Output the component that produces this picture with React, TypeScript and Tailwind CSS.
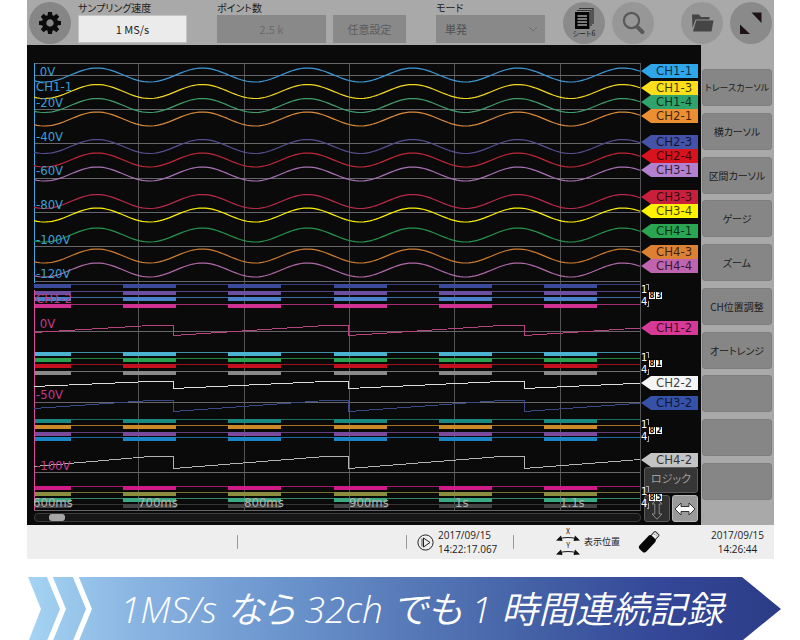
import React from 'react';

interface Channel {
  name: string;
  tagY: number;
  tag: string;
  line: string;
}

interface SineChannel extends Channel {
  center: number;
}

interface RampChannel extends Channel {
  start: number;
  high: number;
  low: number;
}

// All y values are measured from the top edge of the plot.
const PLOT_WIDTH = 607;
const PLOT_HEIGHT = 449;
const PERIOD = 105.25;
const RAMP_PERIOD = 175.3;

const sineChannels: SineChannel[] = [
  { name: 'CH1-1', center: 12, tagY: 8, tag: '#2fa5ea', line: '#3f9bd8' },
  { name: 'CH1-3', center: 28.5, tagY: 25, tag: '#fcdf1a', line: '#f2d91f' },
  { name: 'CH1-4', center: 42.5, tagY: 39, tag: '#2fa36b', line: '#3f9f6c' },
  { name: 'CH2-1', center: 56, tagY: 53, tag: '#ea9033', line: '#d98a3a' },
  { name: 'CH2-3', center: 83.5, tagY: 79, tag: '#4452a8', line: '#54508f' },
  { name: 'CH2-4', center: 97, tagY: 93, tag: '#d8131f', line: '#c02838' },
  { name: 'CH3-1', center: 111, tagY: 107, tag: '#b380cf', line: '#a873b4' },
  { name: 'CH3-3', center: 138.5, tagY: 134, tag: '#c8203c', line: '#b82a4a' },
  { name: 'CH3-4', center: 152, tagY: 148, tag: '#fff200', line: '#fff200' },
  { name: 'CH4-1', center: 172, tagY: 168, tag: '#2aa552', line: '#26954f' },
  { name: 'CH4-3', center: 193, tagY: 189, tag: '#dc8033', line: '#cc7c30' },
  { name: 'CH4-4', center: 207, tagY: 203, tag: '#c064b0', line: '#b06aa8' },
];

const rampChannels: RampChannel[] = [
  { name: 'CH1-2', start: 269.5, high: 262.5, low: 272.5, tagY: 265, tag: '#d63a96', line: '#b8447f' },
  { name: 'CH2-2', start: 323.5, high: 318.5, low: 325.5, tagY: 320, tag: '#f5f5f5', line: '#dcdcdc' },
  { name: 'CH3-2', start: 345.5, high: 337.5, low: 348.5, tagY: 340, tag: '#3552a8', line: '#3a4a86' },
  { name: 'CH4-2', start: 403.5, high: 393.5, low: 405.5, tagY: 397, tag: '#c4c4c4', line: '#b4b4b4' },
];

const logicGroups = [
  { digit: '3', rows: [221, 228, 234, 241], colors: ['#3c4a9b', '#6b4fa0', '#4a80c8', '#cf3191'] },
  { digit: '1', rows: [289, 295, 301, 308], colors: ['#4bb3cf', '#2aa050', '#c4101f', '#8a8a8a'] },
  { digit: '2', rows: [356, 362, 369, 374], colors: ['#1a8a80', '#cc8a2b', '#7a4a9c', '#1a85c4'] },
  { digit: '5', rows: [423, 429, 435, 441], colors: ['#cf1a88', '#8c8c40', '#3aa880', '#444444'] },
];

const hLines = [0, 12, 46, 80, 115, 149, 183, 218, 268, 339, 409, 447];
const vLines = [104, 210, 315, 420, 526, 606];

const upperScale = [
  { text: '\u00a00V', y: 9 },
  { text: 'CH1-1', y: 24 },
  { text: '-20V', y: 40 },
  { text: '-40V', y: 74 },
  { text: '-60V', y: 108 },
  { text: '-80V', y: 142 },
  { text: '-100V', y: 177 },
  { text: '-120V', y: 211 },
];

const lowerScale = [
  { text: 'CH1-2', y: 236 },
  { text: '\u00a00V', y: 261 },
  { text: '-50V', y: 332 },
  { text: '-100V', y: 403 },
];

const timeTicks = [
  { text: '600ms', x: -1 },
  { text: '700ms', x: 104 },
  { text: '800ms', x: 210 },
  { text: '900ms', x: 315 },
  { text: '1s', x: 421 },
  { text: '1.1s', x: 526 },
];

const sideButtons = [
  'トレースカーソル',
  '横カーソル',
  '区間カーソル',
  'ゲージ',
  'ズーム',
  'CH位置調整',
  'オートレンジ',
  '',
  '',
  '',
];

function sinePath(center: number) {
  const points: string[] = [];
  for (let x = 0; x <= 606; x += 3) {
    const y = center - 7 * Math.cos((2 * Math.PI * (x - 63)) / PERIOD);
    points.push(`${x},${y.toFixed(2)}`);
  }
  return points.join(' ');
}

function rampPath({ start, high, low }: RampChannel) {
  let d = `M0 ${start} L116 ${high} H139.5`;
  for (let i = 0; i < 2; i += 1) {
    const x = 139.5 + i * RAMP_PERIOD;
    d += ` V${low} L${x + 152} ${high} H${x + RAMP_PERIOD}`;
  }
  const y = low + (high - low) * 0.75;
  return `${d} V${low} L606 ${y}`;
}

const Plot = () => (
  <div className="relative h-[449px] min-w-0 flex-1 overflow-hidden">
    <svg
      className="absolute inset-0 h-full w-full"
      viewBox={`0 0 ${PLOT_WIDTH} ${PLOT_HEIGHT}`}
      preserveAspectRatio="none"
      fill="none"
    >
      <g shapeRendering="crispEdges">
        {vLines.map((x) => (
          <path key={x} d={`M${x + 0.5} 0V448`} stroke="#545456" />
        ))}
        {hLines.map((y) => (
          <path key={y} d={`M0 ${y + 0.5}H606`} stroke="#66666a" />
        ))}
        {logicGroups.map((group) =>
          group.rows.map((y, i) => (
            <g key={y}>
              <path d={`M0 ${y + 0.5}H606`} stroke={group.colors[i]} strokeOpacity={0.8} />
              {[-1, 0, 1, 2, 3, 4].map((k) => (
                <rect key={k} x={89 + k * PERIOD} y={y} width={53} height={4} fill={group.colors[i]} />
              ))}
            </g>
          )),
        )}
        <path d="M0.5 0V220" stroke="#3fa9e0" />
        <path d="M0.5 227V447" stroke="#d84a9a" />
      </g>
      {sineChannels.map((ch) => (
        <polyline key={ch.name} points={sinePath(ch.center)} stroke={ch.line} strokeWidth={1.2} />
      ))}
      {rampChannels.map((ch) => (
        <path key={ch.name} d={rampPath(ch)} stroke={ch.line} shapeRendering="crispEdges" />
      ))}
    </svg>

    {upperScale.map((label) => (
      <span
        key={label.text}
        className="absolute left-[2px] -translate-y-1/2 text-[13px] leading-4 text-[#3a9fd6]"
        style={{ top: label.y }}
      >
        {label.text}
      </span>
    ))}
    {lowerScale.map((label) => (
      <span
        key={label.text}
        className="absolute left-[2px] -translate-y-1/2 text-[13px] leading-4 text-[#c23a8a]"
        style={{ top: label.y }}
      >
        {label.text}
      </span>
    ))}
    {timeTicks.map((tick) => (
      <span
        key={tick.text}
        className="absolute top-[432px] text-[13px] leading-4 text-[#b0b0b0]"
        style={{ left: `${(tick.x / PLOT_WIDTH) * 100}%` }}
      >
        {tick.text}
      </span>
    ))}
  </div>
);

const TagLane = () => (
  <div className="relative flex w-[60px] shrink-0 flex-col justify-end gap-[2px] pr-[3px] pb-[3px] pl-[3px]">
    {[...sineChannels, ...rampChannels].map((ch) => (
      <span
        key={ch.name}
        className="absolute left-0 h-[14px] w-[57px] -translate-y-1/2 pl-[15px] text-[13px] leading-[14px] text-black/75 [clip-path:polygon(0_50%,10px_0,100%_0,100%_100%,10px_100%)]"
        style={{ top: ch.tagY + 18, backgroundColor: ch.tag }}
      >
        {ch.name}
      </span>
    ))}

    <button type="button" className="h-[26px] rounded-[3px] border border-[#5a5a5a] bg-[#363636] text-[11px] text-[#a0a0a0]">
      ロジック
    </button>
    <div className="flex gap-[2px]">
      <button
        type="button"
        aria-label="縦"
        className="flex h-[27px] flex-1 items-center justify-center rounded-[3px] border border-[#5a5a5a] bg-[#303030]"
      >
        <svg width="12" height="22" viewBox="0 0 12 22" fill="none" stroke="#8a8a8a">
          <path d="M6 .8 1 6H3.8V16H1L6 21.2 11 16H8.2V6H11Z" />
        </svg>
      </button>
      <button
        type="button"
        aria-label="横"
        className="flex h-[27px] flex-1 items-center justify-center rounded-[3px] border border-[#b8b8b8] bg-[#9a9a9a]"
      >
        <svg className="shrink-0" width="22" height="14" viewBox="0 0 22 14" fill="#fff" stroke="#333">
          <path d="M1 7 7 1V4.5H15V1L21 7 15 13V9.5H7V13Z" />
        </svg>
      </button>
    </div>

    {logicGroups.map((group) => (
      <div key={group.digit} className="absolute left-0 h-5 w-5 text-white" style={{ top: group.rows[0] + 18 }}>
        <span className="absolute top-0 left-0 text-[11px] leading-3">1</span>
        <span className="absolute top-3 left-0 text-[11px] leading-3">4</span>
        <svg className="absolute top-0 left-1" width="5" height="23" fill="none" stroke="#aaa" shapeRendering="crispEdges">
          <path d="M1 .5H3.5V6M3.5 17V22.5H2" />
        </svg>
        <span className="absolute top-[8px] left-[8px] flex gap-px text-[8px] leading-[7px] font-bold text-black">
          <span className="w-[6px] bg-white text-center">8</span>
          <span className="w-[6px] bg-white text-center">{group.digit}</span>
        </span>
      </div>
    ))}
  </div>
);

const RoundButton = ({ label, className = '', children }: { label: string; className?: string; children: React.ReactNode }) => (
  <button
    type="button"
    aria-label={label}
    className={`flex h-[42px] w-[42px] shrink-0 flex-col items-center justify-center rounded-full ${className}`}
  >
    {children}
  </button>
);

const Header = () => (
  <header className="flex h-[45px] items-center bg-[#a9a9a9] px-[2px] text-[#1c1c1c]">
    <RoundButton label="設定" className="bg-[#868686]">
      <svg width="24" height="24" viewBox="-12 -12 24 24" fill="#0c0c0c">
        {[0, 45, 90, 135, 180, 225, 270, 315].map((angle) => (
          <path key={angle} d="M-2.6 -6 -2 -11H2L2.6 -6Z" transform={`rotate(${angle})`} />
        ))}
        <circle r="5.9" fill="none" stroke="#0c0c0c" strokeWidth="4.4" />
      </svg>
    </RoundButton>

    <div className="ml-[7px] flex h-full w-[109px] flex-col">
      <label htmlFor="rate" className="h-[15px] text-[10px] leading-[15px] whitespace-nowrap">
        サンプリング速度
      </label>
      <input
        id="rate"
        readOnly
        defaultValue="1 MS/s"
        className="h-[28px] w-full border border-[#c4c4c4] bg-[#ebebeb] text-center text-[11px]"
      />
    </div>

    <div className="ml-[30px] flex h-full w-[109px] flex-col">
      <label htmlFor="points" className="h-[15px] text-[10px] leading-[15px] whitespace-nowrap">
        ポイント数
      </label>
      <input
        id="points"
        disabled
        defaultValue="2.5 k"
        className="h-[28px] w-full bg-[#898989] text-center text-[11px] text-[#6a6a6a]"
      />
    </div>
    <button type="button" disabled className="mt-[13px] ml-[7px] h-[28px] w-[73px] bg-[#898989] text-[11px] text-[#5c5c5c]">
      任意設定
    </button>

    <div className="relative ml-[30px] flex h-full w-[109px] flex-col">
      <label htmlFor="mode" className="h-[15px] text-[10px] leading-[15px] whitespace-nowrap">
        モード
      </label>
      <select
        id="mode"
        disabled
        className="h-[28px] w-full appearance-none bg-[#898989] pl-[9px] text-[11px] text-[#505050] opacity-100"
      >
        <option>単発</option>
      </select>
      <svg className="pointer-events-none absolute right-[7px] bottom-[13px]" width="10" height="6" fill="none" stroke="#6e6e6e">
        <path d="M1 1 5 5 9 1" />
      </svg>
    </div>

    <div className="ml-auto flex gap-[7px]">
      <RoundButton label="シート6" className="bg-[#8a8a8a]">
        <svg width="20" height="21" viewBox="0 0 20 21">
          <path d="M5 .5H19V16" fill="none" stroke="#333" strokeWidth="1.2" />
          <path d="M3 2.5H17V18" fill="none" stroke="#333" strokeWidth="1.2" />
          <rect x="1" y="4" width="14.5" height="17" fill="#050505" />
          <path d="M3.5 8H13M3.5 11H13M3.5 14H13M3.5 17H13" stroke="#a0a0a0" strokeWidth="1.3" />
        </svg>
        <span className="text-[7px] leading-[9px]">シート6</span>
      </RoundButton>
      <RoundButton label="検索" className="mr-5 bg-[#979797]">
        <svg width="24" height="24" viewBox="0 0 24 24" fill="none" stroke="#585858">
          <circle cx="10.5" cy="9.5" r="7.6" strokeWidth="2.2" />
          <path d="M15.6 15.2 17.6 17.2" strokeWidth="2.4" />
          <path d="M17 16.6 21.4 21" strokeWidth="4" strokeLinecap="round" />
        </svg>
      </RoundButton>
      <RoundButton label="フォルダ" className="bg-[#979797]">
        <svg width="23" height="20" viewBox="0 0 23 20" fill="#454545">
          <path d="M1 1.5H8L10 4H18.5V6.5H4.5L1.5 15Z" />
          <path d="M5.2 7.5H22.5L20.5 18.5H2Z" />
        </svg>
      </RoundButton>
      <RoundButton label="全画面" className="bg-[#8a8a8a]">
        <svg width="24" height="24" viewBox="0 0 24 24" fill="#1c1214">
          <path d="M12.5 1.5H22.5V12Z" />
          <path d="M1 13.5V23H11Z" />
        </svg>
      </RoundButton>
    </div>
  </header>
);

const AxisArrow = ({ axis }: { axis: string }) => (
  <span className="flex flex-col items-center">
    <span className="text-[7px] leading-[7px]">{axis}</span>
    <svg width="24" height="7" viewBox="0 0 24 7">
      <path d="M4 3.5Q12 1.5 20 3.5" fill="none" stroke="#222" strokeWidth="1.2" />
      <path d="M0 5.5 5 .5 6.5 6ZM24 5.5 19 .5 17.5 6Z" fill="#111" />
    </svg>
  </span>
);

const StatusBar = () => (
  <footer className="flex h-[34px] items-center bg-[#eeeeee] text-[#1c1c1c]">
    <span className="h-[14px] w-[211px] border-r border-[#999]" />
    <span className="h-[14px] w-[169px] border-r border-[#999]" />
    <div className="flex w-[106px] items-center gap-1 pl-[10px]">
      <svg className="shrink-0" width="17" height="17" viewBox="0 0 17 17" fill="none" stroke="#222">
        <circle cx="8.5" cy="8.5" r="7.6" />
        <path d="M6.5 4 13 8.5 6.5 13Z" />
        <path d="M5 4.5V12.5" strokeWidth="0.8" />
      </svg>
      <p className="font-['Open_Sans','Noto_Sans_CJK_JP',sans-serif] text-[10px] leading-[14px]">
        2017/09/15
        <br />
        14:22:17.067
      </p>
    </div>
    <span className="h-[14px] w-px bg-[#999]" />
    <div className="ml-[42px] flex items-center gap-1">
      <div>
        <AxisArrow axis="X" />
        <AxisArrow axis="Y" />
      </div>
      <span className="text-[9px]">表示位置</span>
    </div>
    <svg className="ml-[17px]" width="24" height="24" viewBox="-12 -12 24 24">
      <g transform="rotate(43)">
        <rect x="-3" y="-12" width="6" height="7" rx="1" fill="#eee" stroke="#333" />
        <path d="M-1.2 -9.5H-.6M.8 -9.5H1.4" stroke="#333" />
        <rect x="-4.6" y="-6.5" width="9.2" height="18" rx="2.8" fill="#060606" />
      </g>
    </svg>
    <p className="ml-auto w-[73px] text-center font-['Open_Sans','Noto_Sans_CJK_JP',sans-serif] text-[10px] leading-[14px]">
      2017/09/15
      <br />
      14:26:44
    </p>
  </footer>
);

const Banner = () => (
  <div className="relative mt-[18px] mr-[19px] ml-[28px] h-[63px]">
    <div className="flex h-full items-center bg-[linear-gradient(90deg,#a4d4f2_0%,#8ab5e2_14%,#6c96ce_33%,#587ab8_50%,#4461a6_67%,#344798_84%,#2b3c86_100%)] pl-[92px] [clip-path:polygon(0_0,calc(100%-39px)_0,100%_32px,calc(100%-38px)_100%,1px_100%,13px_32px)]">
      <p className="font-['Open_Sans','Noto_Sans_CJK_JP',sans-serif] text-[37px] leading-none font-[350] whitespace-nowrap text-white italic">
        1MS/s なら 32ch でも 1 時間連続記録
      </p>
    </div>
    <svg className="absolute top-0 left-4" width="50" height="63" fill="none" stroke="#fff" strokeWidth="5.5">
      <path d="M5 -2 19 32 5 66M31 -2 45 32 31 66" />
    </svg>
  </div>
);

export default function App() {
  return (
    <div className="min-h-screen overflow-hidden bg-white font-['Noto_Sans_CJK_JP',sans-serif] [font-feature-settings:'palt']">
      <div className="mr-[26px] ml-[27px]">
        <Header />
        <main className="flex h-[480px]">
          <section className="flex min-w-0 flex-1 bg-[#0b0a0b] font-['DejaVu_Sans_Condensed','DejaVu_Sans','Noto_Sans_CJK_JP',sans-serif]">
            <div className="flex min-w-0 flex-1 flex-col pt-[18px] pl-[7px]">
              <div className="flex">
                <Plot />
              </div>
              <div className="mt-px h-[9px] rounded-[4px] border border-[#3c3c3c] bg-[#161616] pl-[14px]">
                <div className="h-[7px] w-4 rounded-[3px] bg-[#a6a6a6]" />
              </div>
            </div>
            <TagLane />
          </section>
          <nav className="flex w-[73px] shrink-0 flex-col justify-between bg-[#a9a9a9] pt-6 pr-[2px] pb-[25px] pl-[1px]">
            {sideButtons.map((label, i) => (
              <button
                key={i}
                type="button"
                className={`h-[37px] w-full rounded-[3px] border border-[#7e7e7e] bg-[#868686] whitespace-nowrap text-[#1c1c1c] ${
                  label.length > 7 ? 'text-[9px]' : 'text-[10px]'
                }`}
              >
                {label}
              </button>
            ))}
          </nav>
        </main>
        <StatusBar />
      </div>
      <Banner />
    </div>
  );
}
